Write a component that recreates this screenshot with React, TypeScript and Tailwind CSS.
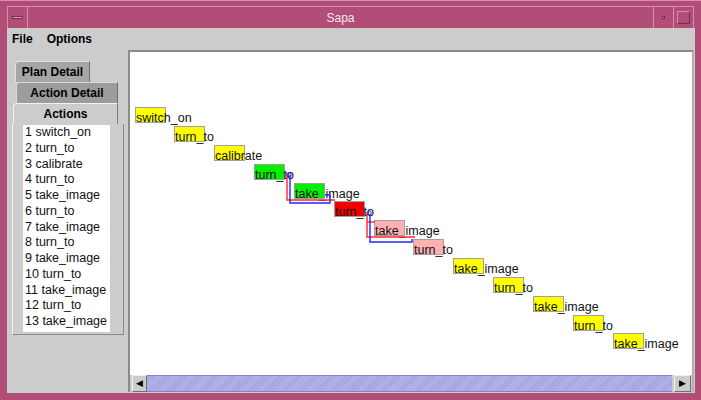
import React from "react";

type Tone = "y" | "g" | "r" | "p";

const steps: [string, Tone][] = [
  ["switch_on", "y"],
  ["turn_to", "y"],
  ["calibrate", "y"],
  ["turn_to", "g"],
  ["take_image", "g"],
  ["turn_to", "r"],
  ["take_image", "p"],
  ["turn_to", "p"],
  ["take_image", "y"],
  ["turn_to", "y"],
  ["take_image", "y"],
  ["turn_to", "y"],
  ["take_image", "y"],
];

const toneClass: Record<Tone, string> = {
  y: "bg-[#ffff00]",
  g: "bg-[#00f000]",
  r: "bg-[#f00000]",
  p: "bg-[#ffb0b0]",
};

// canvas origin on the page is (130, 52)
const OX = 130;
const OY = 52;

function TitleBar() {
  return (
    <div className="flex h-[28px] shrink-0 items-end border-t border-[#d98fb1] pl-[7px] pr-[7px]">
      <div className="flex h-[22px] w-full items-stretch border-t border-[#d78cad]">
        <div className="flex w-[21px] items-center justify-center border-l border-r border-[#d78cad]">
          <div className="h-[3px] w-[11px] border border-[#7a2b4c] bg-[#d7a2ba]" />
        </div>
        <div className="flex flex-1 items-center justify-center text-[12px] text-[#f6e6ee]">Sapa</div>
        <div className="flex w-[20px] items-center justify-center border-l border-[#d78cad]">
          <div className="h-[3px] w-[3px] border border-[#7a2b4c] bg-[#d7a2ba]" />
        </div>
        <div className="flex w-[21px] items-center justify-center border-l border-r border-[#d78cad]">
          <div className="h-[13px] w-[13px] border border-[#d78cad] border-r-[#7a2b4c] border-b-[#7a2b4c]" />
        </div>
      </div>
    </div>
  );
}

function LeftPanel() {
  return (
    <div className="flex w-[121px] shrink-0 flex-col pl-[5px] pt-[11px]">
      <div className="ml-[3px] flex h-[21px] w-[75px] items-center justify-center rounded-tl-[4px] border-l border-t border-r border-[#e2e2e2] border-r-[#6e6e6e] bg-[#a6a6a6] text-[12px] font-bold text-black">
        Plan Detail
      </div>
      <div className="ml-[4px] flex h-[21px] w-[102px] items-center justify-center rounded-tl-[4px] border-l border-t border-r border-[#dadada] border-r-[#6e6e6e] bg-[#9c9c9c] text-[12px] font-bold text-black">
        Action Detail
      </div>
      <div className="ml-[1px] flex h-[21px] w-[105px] items-center justify-center rounded-tl-[4px] border-l border-t border-r border-[#f2f2f2] border-r-[#7a7a7a] bg-[#cccccc] text-[12px] font-bold text-black">
        Actions
      </div>
      <div className="h-[211px] w-[112px] border-l border-b border-r border-[#f2f2f2] border-r-[#8a8a8a] border-b-[#8a8a8a] bg-[#cccccc] pl-[10px] pt-[1px]">
        <ul className="h-[207px] w-[87px] bg-white pl-[2px] text-[12.5px] leading-[15.75px] text-[#111]">
          {steps.map(([name], i) => (
            <li key={i} className="whitespace-nowrap">
              {i + 1} {name}
            </li>
          ))}
        </ul>
      </div>
    </div>
  );
}

function PlanCanvas() {
  return (
    <div className="relative flex-1 overflow-hidden border-l-2 border-t-2 border-r-2 border-[#8a8a8a] border-r-[#b0b0b0] bg-white">
      {steps.map(([name, tone], i) => {
        const x = Math.round(134.5 + 39.85 * i) - OX;
        const y = Math.round(107.2 + 18.85 * i) - OY;
        return (
          <div key={i}>
            <div
              className={`absolute h-[16px] w-[31px] border border-[#a0a0a0] ${toneClass[tone]}`}
              style={{ left: x, top: y }}
            />
            <div
              className="absolute whitespace-nowrap text-[12.5px] leading-[14px] text-[#111]"
              style={{ left: x + 1, top: y + 4 }}
            >
              {name}
            </div>
          </div>
        );
      })}
      <svg className="absolute left-0 top-0" width={565} height={323} fill="none">
        <path d="M157 121 V148 H205" stroke="#ff2a2a" strokeWidth={1.4} />
        <path d="M160 123 V151 H200 V143 H195" stroke="#2424ff" strokeWidth={1.4} />
        <circle cx={159} cy={123} r={2.2} stroke="#2424ff" strokeWidth={1} />
        <path d="M237 161 V185 H285" stroke="#ff2a2a" strokeWidth={1.4} />
        <path d="M237 170 H245" stroke="#ff2a2a" strokeWidth={1.4} />
        <path d="M240 163 V190 H282 V187" stroke="#2424ff" strokeWidth={1.4} />
        <circle cx={239} cy={161} r={2.2} stroke="#2424ff" strokeWidth={1} />
      </svg>
    </div>
  );
}

function ScrollBar() {
  return (
    <div className="flex h-[17px] shrink-0 items-stretch border-l-2 border-r-2 border-[#8a8a8a] border-r-[#b0b0b0] bg-[#cccccc] pl-[2px] pr-[1px]">
      <div className="flex w-[15px] items-center justify-center border border-[#f0f0f0] border-r-[#707070] border-b-[#707070] bg-[#cccccc] text-[9px] leading-none text-black">
        ◀
      </div>
      <div className="flex-1 border-t border-b border-[#8484c4] bg-[repeating-linear-gradient(135deg,#a2a2de_0px,#a2a2de_1px,#b6b6ec_1px,#b6b6ec_2px)]" />
      <div className="ml-[2px] flex w-[17px] items-center justify-center border border-[#f0f0f0] border-r-[#707070] border-b-[#707070] bg-[#cccccc] text-[9px] leading-none text-black">
        ▶
      </div>
    </div>
  );
}

export default function App() {
  return (
    <div className="flex h-[400px] w-[701px] flex-col overflow-hidden bg-[#b24d78] font-['Liberation_Sans',Arial,sans-serif]">
      <TitleBar />
      <div className="flex flex-1 flex-col pb-[7px] pl-[7px] pr-[6px]">
        <div className="flex flex-1 flex-col bg-[#cccccc]">
          <div className="flex h-[22px] shrink-0 items-center gap-[14px] pl-[5px] text-[12px] font-bold text-black">
            <span>File</span>
            <span>Options</span>
          </div>
          <div className="flex flex-1">
            <LeftPanel />
            <div className="flex flex-1 flex-col pb-[1px] pr-[1px]">
              <PlanCanvas />
              <ScrollBar />
            </div>
          </div>
        </div>
      </div>
    </div>
  );
}
